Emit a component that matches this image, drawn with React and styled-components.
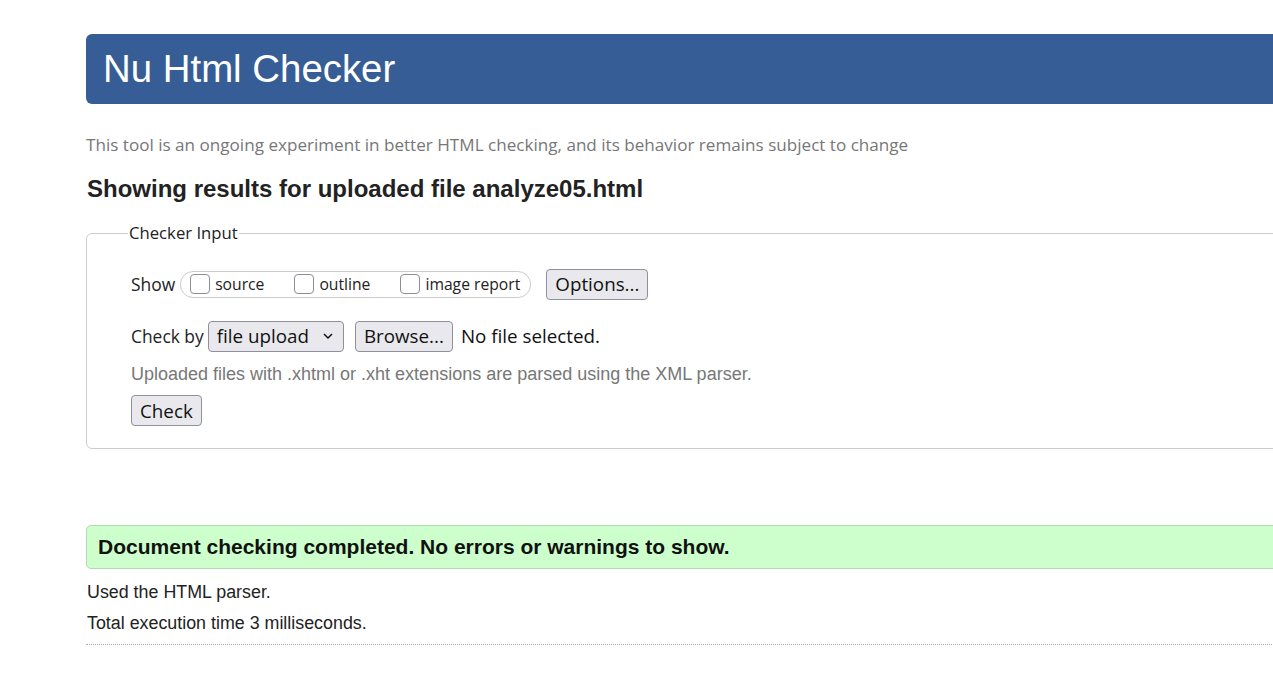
import React from 'react'
import styled, { createGlobalStyle } from 'styled-components'

const Global = createGlobalStyle`
    html, body {
        margin:0;
        padding:0;
        background:#fff;
        overflow:hidden;
    }
`

const Page = styled.div`
    width:1320px;
    padding:34px 0 0 86px;
    font-family:"Liberation Sans", Arial, sans-serif;
    color:#222;
`
const Header = styled.header`
    height:70px;
    background:#365d95;
    border-radius:6px 0 0 6px;
    display:flex;
    align-items:center;
    padding-left:17px;
`
const Title = styled.h1`
    margin:0;
    color:#fff;
    font-weight:400;
    font-size:38.4px;
    line-height:1;
`
const Intro = styled.p`
    margin:30px 0 0 0;
    font-family:"Open Sans", sans-serif;
    font-size:17.1px;
    line-height:22px;
    color:#777;
`
const Results = styled.h2`
    margin:19px 0 0 1px;
    font-size:24px;
    line-height:28px;
    font-weight:700;
    color:#222;
`
const Fieldset = styled.fieldset`
    margin:19px 0 0 0;
    padding:24px 0 22px 44px;
    border:1px solid #ccc;
    border-radius:6px;
    font-family:"Open Sans", sans-serif;
`
const Legend = styled.legend`
    margin-left:-3px;
    padding:0 1px;
    font-size:16.7px;
    line-height:22px;
    color:#222;
`
const Row = styled.div`
    display:flex;
    align-items:center;
    height:32px;
    margin-bottom:${p => p.mb || 0}px;
`
const Label = styled.span`
    font-size:17.4px;
    color:#222;
    margin-right:${p => p.mr || 4}px;
`
const Pill = styled.div`
    display:flex;
    align-items:center;
    height:25px;
    border:1px solid #ccc;
    border-radius:13px;
    padding:0 10px 0 9px;
    margin-right:15px;
`
const Opt = styled.label`
    display:flex;
    align-items:center;
    font-size:15.7px;
    color:#222;
    margin-right:${p => p.mr || 0}px;
`
const Box = styled.span`
    display:inline-block;
    width:20px;
    height:20px;
    border:1px solid #8e8e96;
    border-radius:4px;
    background:#fff;
    box-sizing:border-box;
    margin-right:5px;
`
const Button = styled.button`
    font-family:"Open Sans", sans-serif;
    font-size:18.8px;
    height:31px;
    padding:0 8px;
    border:1px solid #8f8f9d;
    border-radius:4px;
    background:#e9e9ed;
    color:#111;
    margin-right:${p => p.mr || 0}px;
`
const Select = styled.div`
    display:flex;
    align-items:center;
    height:31px;
    box-sizing:border-box;
    padding:0 10px 0 8px;
    border:1px solid #8f8f9d;
    border-radius:4px;
    background:#e9e9ed;
    font-size:18.8px;
    color:#111;
    margin-right:11px;
    svg { margin-left:14px; }
`
const FileText = styled.span`
    font-size:18.8px;
    color:#111;
`
const Hint = styled.p`
    margin:12px 0 11px 0;
    font-family:"Liberation Sans", Arial, sans-serif;
    font-size:18px;
    line-height:20px;
    color:#777;
`
const Success = styled.div`
    margin-top:76px;
    height:44px;
    box-sizing:border-box;
    display:flex;
    align-items:center;
    padding-left:11px;
    background:#ccffcc;
    border:1px solid #b5d9b5;
    border-radius:5px;
    font-weight:700;
    font-size:21px;
    color:#111;
`
const Line = styled.p`
    margin:${p => p.mt}px 0 0 1px;
    font-size:17.85px;
    line-height:20px;
    color:#222;
`
const Rule = styled.hr`
    margin:11px 0 0 0;
    border:0;
    border-top:1px dotted #aaa;
`

export default function App() {
    return (
        <Page>
            <Global />
            <Header>
                <Title>Nu Html Checker</Title>
            </Header>
            <Intro>This tool is an ongoing experiment in better HTML checking, and its behavior remains subject to change</Intro>
            <Results>Showing results for uploaded file analyze05.html</Results>
            <Fieldset>
                <Legend>Checker Input</Legend>
                <Row mb={20}>
                    <Label mr={5}>Show</Label>
                    <Pill>
                        <Opt mr={30}><Box />source</Opt>
                        <Opt mr={30}><Box />outline</Opt>
                        <Opt><Box />image report</Opt>
                    </Pill>
                    <Button>Options...</Button>
                </Row>
                <Row>
                    <Label>Check by</Label>
                    <Select>
                        file upload
                        <svg width="10" height="7" viewBox="0 0 10 7"><path d="M1 1l4 4 4-4" fill="none" stroke="#111" strokeWidth="1.5" /></svg>
                    </Select>
                    <Button mr={8}>Browse...</Button>
                    <FileText>No file selected.</FileText>
                </Row>
                <Hint>Uploaded files with .xhtml or .xht extensions are parsed using the XML parser.</Hint>
                <Button>Check</Button>
            </Fieldset>
            <Success>Document checking completed. No errors or warnings to show.</Success>
            <Line mt={13}>Used the HTML parser.</Line>
            <Line mt={11}>Total execution time 3 milliseconds.</Line>
            <Rule />
        </Page>
    )
}
